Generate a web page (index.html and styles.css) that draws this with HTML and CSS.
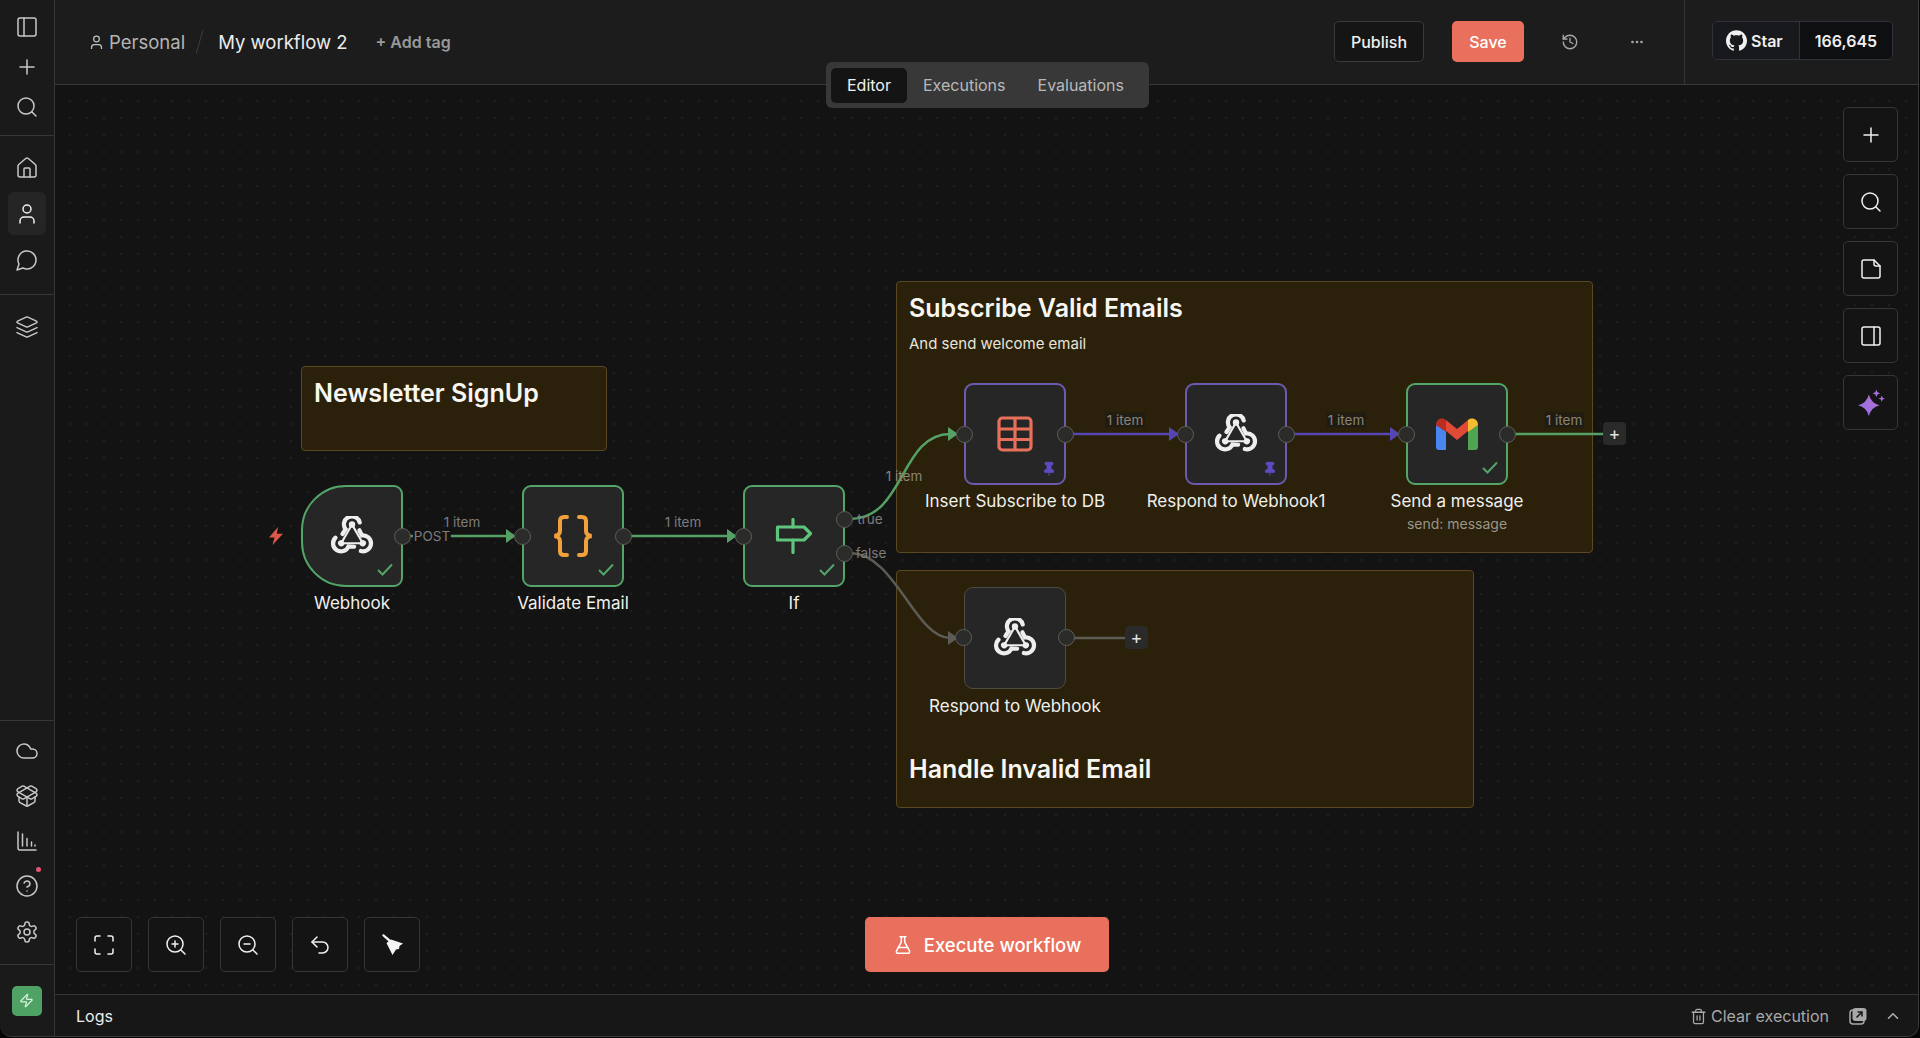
FILE: index.html
```html
<!DOCTYPE html>
<html lang="en">
<head>
  <meta charset="UTF-8">
  <title>My workflow 2</title>
  <link rel="stylesheet" href="styles.css">
</head>
<body>

  <svg class="defs" width="0" height="0">
    <symbol id="webhook" viewBox="-22 -21 44 40">
      <g id="lobe" fill="none" stroke="#eeeef0">
        <path stroke-width="4.200" stroke-linecap="round" d="M7.700 -14.600 A8 8 0 1 0 -6.400 -7.800 L-9.500 -3"/>
        <path stroke-width="2.200" d="M0 -12.500 L10.800 6.200"/>
        <circle cx="0" cy="-12.500" r="3.200" fill="#eeeef0" stroke="none"/>
      </g>
      <use href="#lobe" transform="rotate(120)"/>
      <use href="#lobe" transform="rotate(240)"/>
    </symbol>
    <symbol id="check" viewBox="0 0 16 13">
      <path d="M1 7l4.500 4.500L15 1.500" fill="none" stroke="#54a468" stroke-width="2"/>
    </symbol>
    <symbol id="pin" viewBox="0 0 24 24">
      <path fill="#5d4bc0" stroke="#5d4bc0" stroke-width="1.500" d="M12 17v5M9 10.760a2 2 0 0 1-1.110 1.790l-1.780.9A2 2 0 0 0 5 15.240V16a1 1 0 0 0 1 1h12a1 1 0 0 0 1-1v-.76a2 2 0 0 0-1.110-1.790l-1.780-.9A2 2 0 0 1 15 10.760V7a1 1 0 0 1 1-1 2 2 0 0 0 0-4H8a2 2 0 0 0 0 4 1 1 0 0 1 1 1z"/>
    </symbol>
    <linearGradient id="sparkle" x1="0" y1="1" x2="1" y2="0">
      <stop offset="0" stop-color="#8f6ff0"/>
      <stop offset="1" stop-color="#b86fc8"/>
    </linearGradient>
  </svg>

  <div class="app">

    <aside class="sidebar">
      <div class="side-group side-top">
        <div class="side-btn">
          <svg class="icon" viewBox="0 0 24 24"><rect x="3" y="3" width="18" height="18" rx="2"/><path d="M9 3v18"/></svg>
        </div>
        <div class="side-btn">
          <svg class="icon" viewBox="0 0 24 24"><path d="M5 12h14M12 5v14"/></svg>
        </div>
        <div class="side-btn">
          <svg class="icon" viewBox="0 0 24 24"><circle cx="11" cy="11" r="8"/><path d="m21 21-4.300-4.300"/></svg>
        </div>
      </div>
      <div class="side-group">
        <div class="side-btn">
          <svg class="icon" viewBox="0 0 24 24"><path d="M15 21v-8a1 1 0 0 0-1-1h-4a1 1 0 0 0-1 1v8"/><path d="M3 10a2 2 0 0 1 .709-1.528l7-5.999a2 2 0 0 1 2.582 0l7 5.999A2 2 0 0 1 21 10v9a2 2 0 0 1-2 2H5a2 2 0 0 1-2-2z"/></svg>
        </div>
        <div class="side-btn active">
          <svg class="icon" viewBox="0 0 24 24"><path d="M19 21v-2a4 4 0 0 0-4-4H9a4 4 0 0 0-4 4v2"/><circle cx="12" cy="7" r="4"/></svg>
        </div>
        <div class="side-btn">
          <svg class="icon" viewBox="0 0 24 24"><path d="M7.900 20A9 9 0 1 0 4 16.100L2 22Z"/></svg>
        </div>
      </div>
      <div class="side-group no-border">
        <div class="side-btn">
          <svg class="icon" viewBox="0 0 24 24"><path d="m12.830 2.180a2 2 0 0 0-1.660 0L2.600 6.080a1 1 0 0 0 0 1.830l8.580 3.910a2 2 0 0 0 1.660 0l8.580-3.900a1 1 0 0 0 0-1.830Z"/><path d="m22 17.650-9.170 4.160a2 2 0 0 1-1.660 0L2 17.650"/><path d="m22 12.650-9.170 4.160a2 2 0 0 1-1.660 0L2 12.650"/></svg>
        </div>
      </div>

      <div class="side-group side-bottom">
        <div class="side-btn">
          <svg class="icon" viewBox="0 0 24 24"><path d="M17.500 19H9a7 7 0 1 1 6.710-9h1.790a4.500 4.500 0 1 1 0 9Z"/></svg>
        </div>
        <div class="side-btn">
          <svg class="icon" viewBox="0 0 24 24"><path d="M12 22v-9"/><path d="M15.170 2.210a1.670 1.670 0 0 1 1.630 0L21 4.570a1.930 1.930 0 0 1 0 3.360L8.820 14.790a1.655 1.655 0 0 1-1.640 0L3 12.430a1.930 1.930 0 0 1 0-3.360z"/><path d="M20 13v3.870a2.060 2.060 0 0 1-1.110 1.830l-5.700 3.050a2.500 2.500 0 0 1-2.380 0l-5.700-3.050A2.060 2.060 0 0 1 4 16.870V13"/><path d="M21 12.430a1.930 1.930 0 0 0 0-3.360L8.830 2.200a1.640 1.640 0 0 0-1.630 0L3 4.570a1.930 1.930 0 0 0 0 3.360l12.180 6.860a1.636 1.636 0 0 0 1.630 0z"/></svg>
        </div>
        <div class="side-btn">
          <svg class="icon" viewBox="0 0 24 24"><path d="M3 3v16a2 2 0 0 0 2 2h16"/><path d="M7.500 17V5M12 17V9.500M16.500 17v-4M20 17v-1"/></svg>
        </div>
        <div class="side-btn">
          <svg class="icon" viewBox="0 0 24 24"><circle cx="12" cy="12" r="10"/><path d="M9.090 9a3 3 0 0 1 5.830 1c0 2-3 3-3 3"/><path d="M12 17h.01"/></svg>
          <span class="side-dot"></span>
        </div>
        <div class="side-btn">
          <svg class="icon" viewBox="0 0 24 24"><path d="M12.220 2h-.44a2 2 0 0 0-2 2v.18a2 2 0 0 1-1 1.730l-.43.25a2 2 0 0 1-2 0l-.15-.08a2 2 0 0 0-2.730.73l-.22.38a2 2 0 0 0 .73 2.730l.15.1a2 2 0 0 1 1 1.720v.51a2 2 0 0 1-1 1.740l-.15.09a2 2 0 0 0-.73 2.730l.22.38a2 2 0 0 0 2.730.73l.15-.08a2 2 0 0 1 2 0l.43.25a2 2 0 0 1 1 1.730V20a2 2 0 0 0 2 2h.44a2 2 0 0 0 2-2v-.18a2 2 0 0 1 1-1.730l.43-.25a2 2 0 0 1 2 0l.15.08a2 2 0 0 0 2.730-.73l.22-.39a2 2 0 0 0-.73-2.730l-.15-.08a2 2 0 0 1-1-1.740v-.5a2 2 0 0 1 1-1.740l.15-.09a2 2 0 0 0 .73-2.730l-.22-.38a2 2 0 0 0-2.730-.73l-.15.08a2 2 0 0 1-2 0l-.43-.25a2 2 0 0 1-1-1.730V4a2 2 0 0 0-2-2z"/><circle cx="12" cy="12" r="3"/></svg>
        </div>
      </div>
      <div class="side-badge-row">
        <div class="side-badge">
          <svg viewBox="0 0 24 24"><path d="M4 14a1 1 0 0 1-.78-1.630l9.900-10.200a.5.5 0 0 1 .86.46l-1.920 6.020A1 1 0 0 0 13 10h7a1 1 0 0 1 .78 1.630l-9.900 10.200a.5.5 0 0 1-.86-.46l1.920-6.020A1 1 0 0 0 11 14z"/></svg>
        </div>
      </div>
    </aside>

    <main class="main">

      <header class="topbar">
        <div class="crumbs">
          <svg class="crumb-icon" viewBox="0 0 24 24"><path d="M19 21v-2a4 4 0 0 0-4-4H9a4 4 0 0 0-4 4v2"/><circle cx="12" cy="7" r="4"/></svg>
          <span class="crumb-project">Personal</span>
          <span class="crumb-slash"></span>
          <span class="crumb-name">My workflow 2</span>
          <span class="add-tag">+ Add tag</span>
        </div>
        <div class="actions">
          <button class="btn-publish">Publish</button>
          <button class="btn-save">Save</button>
          <div class="top-icon">
            <svg viewBox="0 0 24 24"><path d="M3 12a9 9 0 1 0 9-9 9.750 9.750 0 0 0-6.740 2.740L3 8"/><path d="M3 3v5h5"/><path d="M12 7v5l4 2"/></svg>
          </div>
          <div class="top-icon">
            <svg viewBox="0 0 24 24"><circle cx="6" cy="12" r="1"/><circle cx="12" cy="12" r="1"/><circle cx="18" cy="12" r="1"/></svg>
          </div>
        </div>
        <div class="github-wrap">
          <div class="github">
            <span class="github-star">
              <svg viewBox="0 0 24 24"><path d="M12 .297c-6.630 0-12 5.373-12 12 0 5.303 3.438 9.800 8.205 11.385.6.113.82-.258.82-.577 0-.285-.01-1.040-.015-2.040-3.338.724-4.042-1.610-4.042-1.610C4.422 18.070 3.633 17.700 3.633 17.700c-1.087-.744.084-.729.084-.729 1.205.084 1.838 1.236 1.838 1.236 1.070 1.835 2.809 1.305 3.495.998.108-.776.417-1.305.76-1.605-2.665-.3-5.466-1.332-5.466-5.930 0-1.310.465-2.380 1.235-3.220-.135-.303-.54-1.523.105-3.176 0 0 1.005-.322 3.300 1.230.96-.267 1.980-.399 3-.405 1.020.006 2.040.138 3 .405 2.280-1.552 3.285-1.230 3.285-1.230.645 1.653.24 2.873.12 3.176.765.84 1.230 1.910 1.230 3.220 0 4.610-2.805 5.625-5.475 5.920.42.36.81 1.096.81 2.220 0 1.606-.015 2.896-.015 3.286 0 .315.21.69.825.57C20.565 22.092 24 17.592 24 12.297c0-6.627-5.373-12-12-12"/></svg>
              Star
            </span>
            <span class="github-count">166,645</span>
          </div>
        </div>
      </header>

      <div class="tabs">
        <span class="tab active">Editor</span>
        <span class="tab">Executions</span>
        <span class="tab">Evaluations</span>
      </div>

      <section class="canvas">

        <!-- sticky notes -->
        <div class="sticky sticky-newsletter">
          <h2>Newsletter SignUp</h2>
        </div>
        <div class="sticky sticky-subscribe">
          <h2>Subscribe Valid Emails</h2>
          <p>And send welcome email</p>
        </div>
        <div class="sticky sticky-invalid">
          <h2>Handle Invalid Email</h2>
        </div>

        <!-- edges, coordinates are page pixels -->
        <svg class="edges" viewBox="55 85 1863 909">
          <g class="edge-green">
            <path d="M404 536H416M449 536H508"/>
            <path d="M625 536H729"/>
            <path d="M850 519C905 519 900 434 950 434"/>
            <path d="M1510 434H1604"/>
          </g>
          <polygon class="arrow-green" points="506,529 516,536 506,543"/>
          <polygon class="arrow-green" points="727,529 737,536 727,543"/>
          <polygon class="arrow-green" points="948,427 958,434 948,441"/>
          <g class="edge-purple">
            <path d="M1067 434H1171"/>
            <path d="M1288 434H1392"/>
          </g>
          <polygon class="arrow-purple" points="1169,427 1179,434 1169,441"/>
          <polygon class="arrow-purple" points="1390,427 1400,434 1390,441"/>
          <g class="edge-grey">
            <path d="M850 553C895 553 915 638 950 638"/>
            <path d="M1067 638H1127"/>
          </g>
          <polygon class="arrow-grey" points="948,631 958,638 948,645"/>
        </svg>

        <span class="edge-label label-post">POST</span>
        <span class="edge-label label-true">true</span>
        <span class="edge-label label-false">false</span>
        <span class="edge-label item-webhook">1 item</span>
        <span class="edge-label item-validate">1 item</span>
        <span class="edge-label on-sticky item-if">1 item</span>
        <span class="edge-label on-sticky item-insert">1 item</span>
        <span class="edge-label on-sticky item-respond">1 item</span>
        <span class="edge-label on-sticky item-send">1 item</span>

        <span class="add-node add-send">+</span>
        <span class="add-node add-respond">+</span>

        <!-- nodes -->
        <svg class="trigger-bolt" viewBox="0 0 16 18"><path d="M10 0L1 10.500H6.500L4.500 18L15 6.800H8.800z"/></svg>

        <div class="node node-webhook done trigger">
          <svg class="node-icon icon-webhook"><use href="#webhook"/></svg>
          <span class="port port-out"></span>
          <svg class="status"><use href="#check"/></svg>
          <div class="node-label">Webhook</div>
        </div>

        <div class="node node-validate done">
          <svg class="node-icon icon-braces" viewBox="0 0 40 42"><path d="M14 2H11Q7 2 7 6V16Q7 20 1.500 21Q7 22 7 26V36Q7 40 11 40H14"/><path d="M26 2H29Q33 2 33 6V16Q33 20 38.500 21Q33 22 33 26V36Q33 40 29 40H26"/></svg>
          <span class="port port-in"></span>
          <span class="port port-out"></span>
          <svg class="status"><use href="#check"/></svg>
          <div class="node-label">Validate Email</div>
        </div>

        <div class="node node-if done">
          <svg class="node-icon icon-sign" viewBox="0 0 38 36"><path d="M18 1.500V9M18 22V34.500"/><path d="M2.500 9H29L35.500 15.500L29 22H2.500Z"/></svg>
          <span class="port port-in"></span>
          <span class="port port-true"></span>
          <span class="port port-false"></span>
          <svg class="status"><use href="#check"/></svg>
          <div class="node-label">If</div>
        </div>

        <div class="node node-insert pinned">
          <svg class="node-icon icon-table" viewBox="0 0 36 36"><rect x="2" y="2" width="32" height="32" rx="3.500"/><path d="M2 13H34M2 23.500H34M18 2V34"/></svg>
          <span class="port port-in"></span>
          <span class="port port-out"></span>
          <svg class="status status-pin"><use href="#pin"/></svg>
          <div class="node-label">Insert Subscribe to DB</div>
        </div>

        <div class="node node-respond1 pinned">
          <svg class="node-icon icon-webhook"><use href="#webhook"/></svg>
          <span class="port port-in"></span>
          <span class="port port-out"></span>
          <svg class="status status-pin"><use href="#pin"/></svg>
          <div class="node-label">Respond to Webhook1</div>
        </div>

        <div class="node node-send done">
          <svg class="node-icon icon-gmail" viewBox="0 0 42 32">
            <path fill="#4a86f0" d="M0 7V29a3 3 0 0 0 3 3H10V12z"/>
            <path fill="#4fa353" d="M42 7V29a3 3 0 0 1-3 3H32V12z"/>
            <path fill="#e04a37" d="M10 2L21 11L32 2V13L21 22L10 13z"/>
            <path fill="#bb2d1e" d="M0 7C0 1 6 -1 10 2V14L0 7z"/>
            <path fill="#f6bd2f" d="M42 7C42 1 36 -1 32 2V14L42 7z"/>
          </svg>
          <span class="port port-in"></span>
          <span class="port port-out"></span>
          <svg class="status"><use href="#check"/></svg>
          <div class="node-label">Send a message<small>send: message</small></div>
        </div>

        <div class="node node-respond">
          <svg class="node-icon icon-webhook"><use href="#webhook"/></svg>
          <span class="port port-in"></span>
          <span class="port port-out"></span>
          <div class="node-label">Respond to Webhook</div>
        </div>

        <!-- canvas tools -->
        <div class="tools-right">
          <div class="tool">
            <svg class="icon" viewBox="0 0 24 24"><path d="M5 12h14M12 5v14"/></svg>
          </div>
          <div class="tool">
            <svg class="icon" viewBox="0 0 24 24"><circle cx="11" cy="11" r="8"/><path d="m21 21-4.300-4.300"/></svg>
          </div>
          <div class="tool">
            <svg class="icon" viewBox="0 0 24 24"><path d="M15 3H5a2 2 0 0 0-2 2v14a2 2 0 0 0 2 2h14a2 2 0 0 0 2-2V9Z"/><path d="M15 3v4a2 2 0 0 0 2 2h4"/></svg>
          </div>
          <div class="tool">
            <svg class="icon" viewBox="0 0 24 24"><rect x="3" y="3" width="18" height="18" rx="2"/><path d="M15 3v18"/></svg>
          </div>
          <div class="tool">
            <svg class="sparkle" viewBox="0 0 26 26" fill="url(#sparkle)"><path d="M11 5Q13 13 21 15Q13 17 11 25Q9 17 1 15Q9 13 11 5Z"/><path d="M18 0.500L19 3L21.500 4L19 5L18 7.500L17 5L14.500 4L17 3Z"/><path d="M23 6L23.800 8.200L26 9L23.800 9.800L23 12L22.200 9.800L20 9L22.200 8.200Z"/></svg>
          </div>
        </div>

        <div class="tools-bottom">
          <div class="tool">
            <svg class="icon" viewBox="0 0 24 24"><path d="M8 3H5a2 2 0 0 0-2 2v3"/><path d="M21 8V5a2 2 0 0 0-2-2h-3"/><path d="M3 16v3a2 2 0 0 0 2 2h3"/><path d="M16 21h3a2 2 0 0 0 2-2v-3"/></svg>
          </div>
          <div class="tool">
            <svg class="icon" viewBox="0 0 24 24"><circle cx="11" cy="11" r="8"/><path d="m21 21-4.300-4.300"/><path d="M11 8v6M8 11h6"/></svg>
          </div>
          <div class="tool">
            <svg class="icon" viewBox="0 0 24 24"><circle cx="11" cy="11" r="8"/><path d="m21 21-4.300-4.300"/><path d="M8 11h6"/></svg>
          </div>
          <div class="tool">
            <svg class="icon" viewBox="0 0 24 24"><path d="M9 14 4 9l5-5"/><path d="M4 9h10.500a5.500 5.500 0 0 1 5.500 5.500a5.500 5.500 0 0 1-5.500 5.500H11"/></svg>
          </div>
          <div class="tool">
            <svg class="broom" viewBox="0 0 21 21"><path d="M0 1.500L1.500 0L9 6.300L7.200 8z"/><path d="M4.500 9L9 5.500L21 9.500L17.500 12L17 15L14 15.500L10.500 21z"/></svg>
          </div>
        </div>

        <button class="btn-execute">
          <svg viewBox="0 0 24 24"><path d="M14 2v6a2 2 0 0 0 .245.96l5.510 10.080A2 2 0 0 1 18 22H6a2 2 0 0 1-1.755-2.960l5.510-10.080A2 2 0 0 0 10 8V2"/><path d="M6.453 15h11.094"/><path d="M8.500 2h7"/></svg>
          Execute workflow
        </button>
      </section>

      <footer class="logs">
        <span class="logs-title">Logs</span>
        <div class="logs-actions">
          <span class="logs-clear">
            <svg viewBox="0 0 24 24"><path d="M3 6h18"/><path d="M19 6v14c0 1-1 2-2 2H7c-1 0-2-1-2-2V6"/><path d="M8 6V4c0-1 1-2 2-2h4c1 0 2 1 2 2v2"/><path d="M10 11v6"/><path d="M14 11v6"/></svg>
            Clear execution
          </span>
          <svg class="logs-popout" viewBox="0 0 18 18"><rect x="1" y="3" width="14" height="14" rx="3" fill="none" stroke="#a8a8a8" stroke-width="1.500"/><rect x="3.500" y="1" width="14" height="13" rx="3" fill="#a8a8a8"/><path d="M7.500 10.500L13 5M8.500 5H13V9.500" fill="none" stroke="#1a1a1a" stroke-width="1.600"/></svg>
          <svg class="logs-chevron" viewBox="0 0 24 24"><path d="m18 15-6-6-6 6"/></svg>
        </div>
      </footer>
    </main>
  </div>

</body>
</html>
```

FILE: styles.css
```css
* { box-sizing: border-box; }
html, body { height: 100%; }
body { margin: 0; background: #050505; font-family: Inter, "Liberation Sans", sans-serif; color: #f0f0f0; overflow: hidden; }
button { font-family: inherit; cursor: pointer; }
.defs { position: absolute; }

.app { display: flex; width: 1919px; height: 1037px; background: #1a1a1a; border-right: 1px solid #3a3a3a; border-bottom: 1px solid #3a3a3a; border-radius: 0 0 12px 12px; overflow: hidden; }

.icon { width: 24px; height: 24px; fill: none; stroke: currentColor; stroke-width: 1.5; stroke-linecap: round; stroke-linejoin: round; }

/* sidebar */
.sidebar { width: 55px; flex: none; display: flex; flex-direction: column; background: #1a1a1a; border-right: 1px solid #363636; }
.side-group { display: flex; flex-direction: column; align-items: center; gap: 3px; padding: 10px 1px 13px 0; border-bottom: 1px solid #363636; }
.side-group.no-border { border-bottom: 0; }
.side-top { gap: 0; padding: 7px 1px 8px 0; }
.side-top .side-btn { height: 40px; }
.side-bottom { margin-top: auto; gap: 2.25px; padding: 8px 1px 11px 0; border-top: 1px solid #363636; }
.side-btn { position: relative; width: 38px; height: 43px; display: flex; align-items: center; justify-content: center; color: #c8c8c8; border-radius: 6px; }
.side-btn.active { background: #252525; color: #f0f0f0; }
.side-dot { position: absolute; top: 2px; right: 5px; width: 5px; height: 5px; border-radius: 50%; background: #e0566f; }
.side-badge-row { height: 71px; display: flex; align-items: center; justify-content: center; padding-right: 1px; }
.side-badge { width: 30px; height: 30px; border-radius: 5px; background: #4ea264; display: flex; align-items: center; justify-content: center; }
.side-badge svg { width: 15px; height: 15px; fill: none; stroke: #d8f0dc; stroke-width: 2; stroke-linejoin: round; }

/* main column */
.main { position: relative; flex: 1; min-width: 0; display: flex; flex-direction: column; }

.topbar { height: 85px; flex: none; display: flex; background: #1c1c1c; border-bottom: 1px solid #383838; }
.crumbs { flex: 1; display: flex; align-items: center; padding-left: 33px; }
.crumb-icon { width: 17px; height: 17px; fill: none; stroke: #c0c0c0; stroke-width: 1.8; margin-right: 4px; }
.crumb-project { font-size: 18.500px; color: #b4b4b4; }
.crumb-slash { width: 1px; height: 24px; margin: 0 18px 0 14px; background: #3d3d3d; transform: rotate(16deg); }
.crumb-name { font-size: 18.500px; color: #ececec; }
.add-tag { margin-left: 28px; font-size: 16px; font-weight: 600; color: #999; }

.actions { display: flex; align-items: center; padding-bottom: 1px; }
.btn-publish { width: 90px; height: 41px; background: #151515; color: #f0f0f0; border: 1px solid #3a3a3a; border-radius: 5px; font-size: 16px; font-weight: 500; }
.btn-save { width: 72px; height: 41px; margin-left: 28px; background: #e9705c; color: #fff; border: 0; border-radius: 5px; font-size: 16px; font-weight: 500; }
.top-icon { width: 42px; height: 42px; display: flex; align-items: center; justify-content: center; margin-left: 25px; }
.top-icon svg { width: 18px; height: 18px; fill: none; stroke: #a8a8a8; stroke-width: 1.8; stroke-linecap: round; stroke-linejoin: round; }
.top-icon:last-child svg { stroke-width: 1.5; fill: #a8a8a8; }

.github-wrap { width: 234px; margin-left: 26px; border-left: 1px solid #333; display: flex; align-items: center; padding-left: 27px; padding-bottom: 3px; }
.github { width: 181px; height: 39px; display: flex; font-size: 16px; font-weight: 600; border: 1px solid #30333a; border-radius: 5px; overflow: hidden; }
.github-star { width: 87px; display: flex; align-items: center; gap: 4px; padding-left: 13px; background: #17191d; border-right: 1px solid #30333a; }
.github-star svg { width: 21px; height: 21px; fill: #f0f0f0; flex: none; }
.github-count { flex: 1; display: flex; align-items: center; justify-content: center; background: #0e0f11; }

.tabs { position: absolute; z-index: 5; top: 62px; left: 771px; width: 323px; height: 46px; display: flex; align-items: center; padding: 0 5px; background: #383838; border-radius: 6px; }
.tab { height: 35px; padding: 0 16px; display: flex; align-items: center; font-size: 16px; color: #b8b8b8; border-radius: 5px; }
.tab.active { background: #141414; color: #f0f0f0; }

/* canvas */
.canvas { position: relative; flex: 1; overflow: hidden; background-color: #131313; background-image: radial-gradient(circle, #2c2c2c 0.8px, transparent 1.1px); background-size: 17px 17px; background-position: 6.5px 7.5px; }

.sticky { position: absolute; padding: 8px 12px; background: #2b2009; border: 1px solid #5a4820; border-radius: 4px; }
.sticky h2 { margin: 0; font-size: 25px; line-height: 36px; font-weight: 600; color: #f8f6f0; }
.sticky p { margin: 8px 0 0; font-size: 15px; line-height: 20px; color: #e8e4da; }
.sticky-newsletter { left: 246px; top: 281px; width: 306px; height: 85px; }
.sticky-subscribe { left: 841px; top: 196px; width: 697px; height: 272px; }
.sticky-invalid { left: 841px; top: 485px; width: 578px; height: 238px; display: flex; align-items: flex-end; padding-bottom: 20px; }

.edges { position: absolute; top: 0; left: 0; width: 1863px; height: 909px; }
.edges path { fill: none; stroke-width: 2.5; }
.edge-green path { stroke: #54a065; }
.edge-purple path { stroke: #5546b4; }
.edge-grey path { stroke: #5c5c56; }
.arrow-green { fill: #54a065; }
.arrow-purple { fill: #5546b4; }
.arrow-grey { fill: #5c5c56; }

.edge-label { position: absolute; font-size: 13.500px; line-height: 15px; padding: 0 1px; color: #7c7c7c; background: #131313; transform: translate(-50%, -50%); white-space: nowrap; }
.edge-label.on-sticky { background: #201c13; color: #8a8578; }
.label-post { left: 377px; top: 451px; }
.label-true { left: 815px; top: 434px; background: transparent; }
.label-false { left: 816px; top: 468px; background: transparent; }
.item-webhook { left: 407px; top: 437px; background: transparent; }
.item-validate { left: 628px; top: 437px; background: transparent; }
.edge-label.item-if { left: 849px; top: 391px; background: transparent; }
.item-insert { left: 1070px; top: 335px; }
.item-respond { left: 1291px; top: 335px; }
.item-send { left: 1509px; top: 335px; }

.add-node { position: absolute; width: 23px; height: 23px; display: flex; align-items: center; justify-content: center; font-size: 18px; line-height: 1; color: #e0e0e0; background: #2a2a2a; border-radius: 4px; }
.add-send { left: 1548px; top: 337px; }
.add-respond { left: 1070px; top: 541px; }

.trigger-bolt { position: absolute; left: 213px; top: 442px; width: 16px; height: 18px; fill: #d9584b; }

/* nodes */
.node { position: absolute; top: 400px; width: 102px; height: 102px; display: flex; align-items: center; justify-content: center; background: #262626; border: 2px solid #4e4b42; border-radius: 9px; }
.node.done { border-color: #54a468; }
.node.pinned { border-color: #6c5ab0; }
.node.trigger { border-radius: 45px 9px 9px 45px; }
.node-webhook { left: 246px; }
.node-validate { left: 467px; }
.node-if { left: 688px; }
.node-insert { left: 909px; top: 298px; }
.node-respond1 { left: 1130px; top: 298px; }
.node-send { left: 1351px; top: 298px; }
.node-respond { left: 909px; top: 502px; border-width: 1.5px; }

.node-icon { display: block; }
.icon-webhook { width: 44px; height: 40px; }
.icon-braces { width: 40px; height: 42px; fill: none; stroke: #f0a03c; stroke-width: 4; stroke-linecap: round; }
.icon-sign { width: 38px; height: 36px; fill: none; stroke: #5fc47c; stroke-width: 3.2; stroke-linecap: round; stroke-linejoin: round; }
.icon-table { width: 36px; height: 36px; fill: none; stroke: #e8705a; stroke-width: 3.2; }
.icon-gmail { width: 42px; height: 32px; }

.port { position: absolute; width: 17px; height: 17px; border-radius: 50%; background: #2b2b2a; border: 1px solid #5e5e58; }
.port-in { left: -10px; top: 41px; }
.port-out { right: -10px; top: 41px; }
.port-true { right: -10px; top: 24px; }
.port-false { right: -10px; top: 58px; }

.status { position: absolute; right: 8px; bottom: 9px; width: 16px; height: 13px; }
.status-pin { right: 7px; bottom: 6px; width: 16px; height: 16px; }

.node-label { position: absolute; left: 50%; top: 100%; margin-top: 8px; transform: translateX(-50%); font-size: 17px; line-height: 20px; text-align: center; white-space: nowrap; color: #f0f0ec; }
.node-label small { display: block; margin-top: 5px; font-size: 14px; line-height: 16px; color: #9a968a; }

/* tools */
.tool { width: 56px; height: 55px; display: flex; align-items: center; justify-content: center; color: #f0f0f0; background: #141414; border: 1px solid #363636; border-radius: 5px; }
.tools-right { position: absolute; top: 22px; right: 20px; display: flex; flex-direction: column; gap: 12px; }
.tools-right .tool { width: 55px; }
.tools-bottom { position: absolute; left: 21px; bottom: 22px; display: flex; gap: 16px; }
.sparkle { width: 28px; height: 28px; }
.broom { width: 21px; height: 21px; fill: #f4f4f4; }

.btn-execute { position: absolute; left: 810px; bottom: 22px; width: 244px; height: 55px; display: flex; align-items: center; justify-content: center; gap: 11px; background: #e9705c; color: #fff; border: 0; border-radius: 5px; font-size: 18.500px; font-weight: 500; }
.btn-execute svg { width: 20px; height: 20px; fill: none; stroke: #fff; stroke-width: 1.8; stroke-linecap: round; stroke-linejoin: round; }

/* logs */
.logs { height: 42px; flex: none; display: flex; align-items: center; justify-content: space-between; padding: 1px 16px 0 21px; background: #171717; border-top: 1px solid #363636; }
.logs-title { font-size: 16px; color: #ececec; }
.logs-actions { display: flex; align-items: center; color: #a8a8a8; }
.logs-clear { display: flex; align-items: center; gap: 4px; font-size: 16px; color: #a8a8a8; }
.logs-clear svg { width: 17px; height: 17px; fill: none; stroke: #a8a8a8; stroke-width: 1.8; stroke-linecap: round; stroke-linejoin: round; }
.logs-popout { width: 18px; height: 18px; margin-left: 20px; }
.logs-chevron { width: 18px; height: 18px; margin-left: 17px; fill: none; stroke: #b0b0b0; stroke-width: 2; stroke-linecap: round; stroke-linejoin: round; }
```
